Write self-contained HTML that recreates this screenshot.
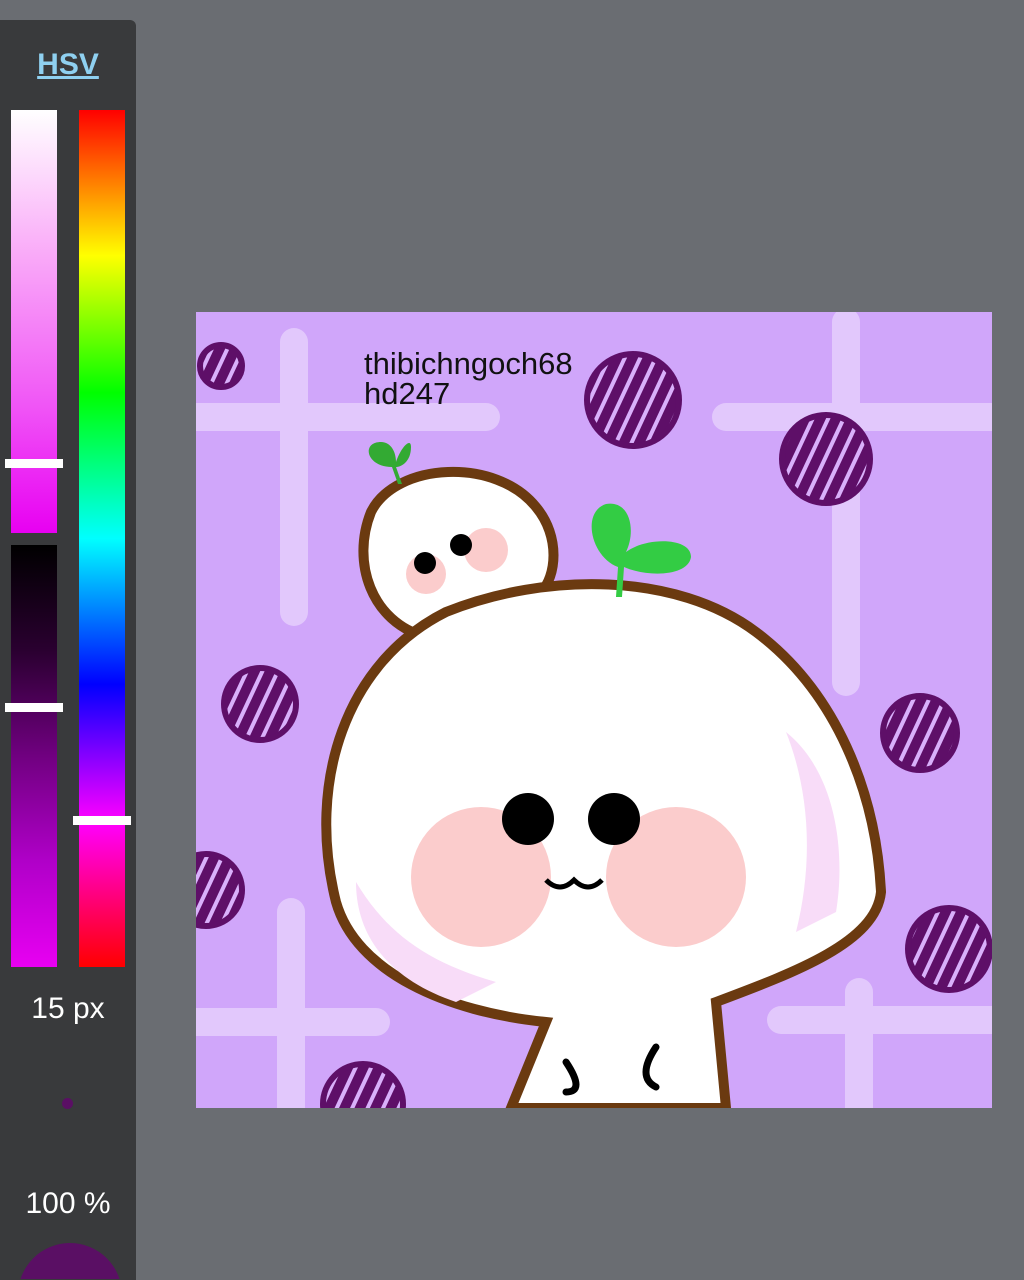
<!DOCTYPE html>
<html style="height:1280px;overflow:hidden"><head><style>
html,body{margin:0;padding:0}
body{width:1024px;height:1280px;background:#6a6d72;position:relative;overflow:hidden;font-family:"Liberation Sans",sans-serif}
#panel{position:absolute;left:0;top:20px;bottom:0;width:136px;background:#393a3c;border-top-right-radius:6px}
.bar{position:absolute}
.t{position:absolute;color:#fff;font-size:30px;line-height:34px;width:136px;text-align:center}
</style></head><body>
<div id="panel"></div>
<svg style="position:absolute;left:18px;top:1243px;display:block" width="104" height="36"><circle cx="52" cy="52" r="52" fill="#5a0f64"/></svg>
<div class="t" style="top:48px;color:#8fd0f0;font-weight:bold;font-size:30px;text-decoration:underline">HSV</div>
<div class="bar" style="left:11px;top:110px;width:46px;height:423px;background:linear-gradient(#fff,#f9a8f8 35%,#f055f6 70%,#e800f2)"></div>
<div class="bar" style="left:79px;top:110px;width:46px;height:857px;background:linear-gradient(#ff0000,#ffff00 17%,#00ff00 33%,#00ffff 50%,#0000ff 67%,#ff00ff 83%,#ff0000)"></div>
<div class="bar" style="left:11px;top:545px;width:46px;height:422px;background:linear-gradient(#000,#2a0030 25%,#700080 50%,#b000c8 75%,#e800f2)"></div>
<div class="bar" style="left:5px;top:459px;width:58px;height:9px;background:#fff"></div>
<div class="bar" style="left:5px;top:703px;width:58px;height:9px;background:#fff"></div>
<div class="bar" style="left:73px;top:816px;width:58px;height:9px;background:#fff"></div>
<div class="t" style="top:992px">15 px</div>
<div class="bar" style="left:62px;top:1098px;width:11px;height:11px;border-radius:50%;background:#5a0f64"></div>
<div class="t" style="top:1187px">100 %</div>
<svg style="position:absolute;left:196px;top:312px;display:block" width="796" height="796" viewBox="0 0 796 796">
<defs><pattern id="st" width="14" height="14" patternUnits="userSpaceOnUse" patternTransform="rotate(25)"><rect width="14" height="14" fill="#5e0f68"/><rect x="0" width="4" height="14" fill="#d9b0fb"/></pattern></defs>
<rect width="796" height="796" fill="#d0a6fa"/>
<g stroke="#e2c8fc" stroke-width="28" stroke-linecap="round" fill="none">
<path d="M98 30V300M0 105H290M650 10V370M530 105H796M95 600V796M0 710H180M663 680V796M585 708H796"/>
</g>
<g fill="url(#st)" stroke="#5e0f68" stroke-width="6">
<circle cx="25" cy="54" r="21"/><circle cx="437" cy="88" r="46"/><circle cx="630" cy="147" r="44"/>
<circle cx="64" cy="392" r="36"/><circle cx="724" cy="421" r="37"/><circle cx="10" cy="578" r="36"/>
<circle cx="753" cy="637" r="41"/><circle cx="167" cy="792" r="40"/>
</g>
<text x="168" y="62" font-size="31" fill="#111">thibichngoch68</text>
<text x="168" y="92" font-size="31" fill="#111">hd247</text>
<path d="M230 325 C175 310 155 250 175 200 C200 150 300 145 340 195 C365 225 360 265 345 280 Z" fill="#fff" stroke="#6b3a10" stroke-width="10"/>
<path d="M315 796 L350 710 C250 700 160 660 140 590 C110 470 150 350 250 300 C350 260 480 260 560 320 C640 380 680 480 685 580 C680 630 600 660 520 690 L530 796 Z" fill="#fff" stroke="#6b3a10" stroke-width="10"/>
<path d="M160 570 C190 620 230 650 300 670 L260 690 C200 670 160 630 160 570Z" fill="#f8dcf8"/>
<path d="M590 420 C640 460 650 540 640 600 L600 620 C620 540 610 470 590 420Z" fill="#f8dcf8"/>
<circle cx="285" cy="565" r="70" fill="#fbcccc"/><circle cx="480" cy="565" r="70" fill="#fbcccc"/>
<circle cx="230" cy="262" r="20" fill="#fbcccc"/><circle cx="290" cy="238" r="22" fill="#fbcccc"/>
<circle cx="332" cy="507" r="26" fill="#000"/><circle cx="418" cy="507" r="26" fill="#000"/>
<circle cx="229" cy="251" r="11" fill="#000"/><circle cx="265" cy="233" r="11" fill="#000"/>
<path d="M350 568 q14 14 28 0 q14 14 28 0" stroke="#000" stroke-width="5" fill="none"/>
<path d="M370 750 q20 30 0 30 M460 735 q-20 30 0 40" stroke="#000" stroke-width="7" fill="none" stroke-linecap="round"/>
<path d="M420 285 L422 255 C395 245 385 200 410 192 C435 188 440 220 430 240 C450 225 495 225 495 245 C492 265 450 265 428 255 L426 285Z" fill="#33cc44"/>
<path d="M202 172 L196 155 C170 155 165 130 185 130 C195 130 200 140 200 150 C205 135 215 125 215 135 C215 150 205 155 200 155 L206 172Z" fill="#33aa33"/>
</svg>
</body></html>
